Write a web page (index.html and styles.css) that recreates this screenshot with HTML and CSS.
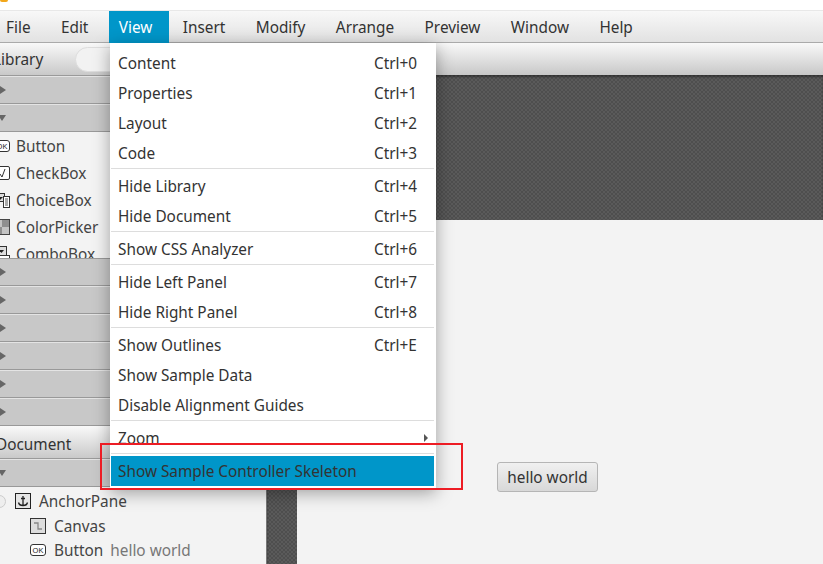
FILE: index.html
```html
<!DOCTYPE html>
<html lang="en">
<head>
  <meta charset="UTF-8" />
  <meta name="viewport" content="width=device-width, initial-scale=1.0" />
  <title>Scene Builder</title>
  <link rel="stylesheet" href="styles.css">
</head>
<body>
  <div class="title-strip"><span class="app-logo"></span></div>

  <div class="menu-bar">
    <span class="menu-title">File</span>
    <span class="menu-title">Edit</span>
    <span class="menu-title active">View</span>
    <span class="menu-title">Insert</span>
    <span class="menu-title">Modify</span>
    <span class="menu-title">Arrange</span>
    <span class="menu-title">Preview</span>
    <span class="menu-title">Window</span>
    <span class="menu-title">Help</span>
  </div>

  <div class="workspace">
    <div class="left-panel">
      <div class="panel-header">
        <span class="panel-name">Library</span>
        <span class="search-box"></span>
      </div>
      <div class="section"><span class="arrow-right"></span></div>
      <div class="section"><span class="arrow-down"></span></div>
      <div class="library-list">
        <div class="library-item">
          <svg class="icon" viewBox="0 0 16 12"><rect x="0.5" y="0.5" width="15" height="11" rx="2.5" fill="#fff" stroke="#333"/><text x="8" y="8.8" class="icon-text">OK</text></svg>
          <span>Button</span>
        </div>
        <div class="library-item">
          <svg class="icon" viewBox="0 0 16 16"><rect x="0.5" y="1.5" width="15" height="13" rx="1.5" fill="#fff" stroke="#333"/><path d="M6 9l2 3 3-8" fill="none" stroke="#333"/></svg>
          <span>CheckBox</span>
        </div>
        <div class="library-item">
          <svg class="icon" viewBox="0 0 16 16"><rect x="0.5" y="1.5" width="10" height="8" fill="#ddd" stroke="#333"/><path d="M3 5h6l-3 3z" fill="#222"/><rect x="9.5" y="4.5" width="6" height="11" fill="#fff" stroke="#333"/><path d="M11 7h3M11 9h3M11 11h3M11 13h3" stroke="#555"/></svg>
          <span>ChoiceBox</span>
        </div>
        <div class="library-item">
          <svg class="icon" viewBox="0 0 16 16"><rect x="0.5" y="0.5" width="15" height="15" fill="#fff" stroke="#444"/><path d="M1 1h7v7H1zM8 8h7v7H8z" fill="#c4c4c4"/><path d="M8 1h7v7H8zM1 8h7v7H1z" fill="#8f8f8f"/></svg>
          <span>ColorPicker</span>
        </div>
        <div class="library-item">
          <svg class="icon" viewBox="0 0 16 16"><rect x="2.5" y="0.5" width="10" height="9" fill="#ddd" stroke="#333"/><path d="M5 4h5l-2.500 3z" fill="#222"/><rect x="0.5" y="9.500" width="15" height="6" fill="#fff" stroke="#333"/></svg>
          <span>ComboBox</span>
        </div>
      </div>
      <div class="section top-line"><span class="arrow-right"></span></div>
      <div class="section"><span class="arrow-right"></span></div>
      <div class="section"><span class="arrow-right"></span></div>
      <div class="section"><span class="arrow-right"></span></div>
      <div class="section"><span class="arrow-right"></span></div>
      <div class="section"><span class="arrow-right"></span></div>
      <div class="panel-header">
        <span class="panel-name doc-name">Document</span>
      </div>
      <div class="section"><span class="arrow-down"></span></div>
      <div class="doc-tree">
        <div class="tree-row root-row">
          <span class="collapse-dot"></span>
          <svg class="icon" viewBox="0 0 16 16"><rect x="0.5" y="0.5" width="15" height="15" fill="#e6e6e6" stroke="#222"/><path d="M8 3v9M6 5.500h4M3.500 9.500c.5 2.500 2.500 3 4.500 3s4-.5 4.500-3" fill="none" stroke="#222" stroke-width="1.300"/></svg>
          <span>AnchorPane</span>
        </div>
        <div class="tree-row child-row">
          <svg class="icon" viewBox="0 0 16 16"><rect x="0.5" y="0.5" width="15" height="15" fill="#ddd" stroke="#333"/><path d="M4 5h4v6h4" fill="none" stroke="#888" stroke-width="1.300"/></svg>
          <span>Canvas</span>
        </div>
        <div class="tree-row child-row">
          <svg class="icon" viewBox="0 0 16 12"><rect x="0.5" y="0.5" width="15" height="11" rx="2.5" fill="#fff" stroke="#333"/><text x="8" y="8.800" class="icon-text">OK</text></svg>
          <span>Button</span>
          <span class="node-label">hello world</span>
        </div>
      </div>
    </div>

    <div class="center-panel">
      <div class="toolbar"></div>
      <div class="stage">
        <div class="content-pane">
          <button class="hello-button" type="button">hello world</button>
        </div>
      </div>
    </div>
  </div>

  <div class="view-menu">
    <div class="menu-item"><span>Content</span><span class="shortcut">Ctrl+0</span></div>
    <div class="menu-item"><span>Properties</span><span class="shortcut">Ctrl+1</span></div>
    <div class="menu-item"><span>Layout</span><span class="shortcut">Ctrl+2</span></div>
    <div class="menu-item"><span>Code</span><span class="shortcut">Ctrl+3</span></div>
    <div class="separator"></div>
    <div class="menu-item"><span>Hide Library</span><span class="shortcut">Ctrl+4</span></div>
    <div class="menu-item"><span>Hide Document</span><span class="shortcut">Ctrl+5</span></div>
    <div class="separator"></div>
    <div class="menu-item"><span>Show CSS Analyzer</span><span class="shortcut">Ctrl+6</span></div>
    <div class="separator"></div>
    <div class="menu-item"><span>Hide Left Panel</span><span class="shortcut">Ctrl+7</span></div>
    <div class="menu-item"><span>Hide Right Panel</span><span class="shortcut">Ctrl+8</span></div>
    <div class="separator"></div>
    <div class="menu-item"><span>Show Outlines</span><span class="shortcut">Ctrl+E</span></div>
    <div class="menu-item"><span>Show Sample Data</span></div>
    <div class="menu-item"><span>Disable Alignment Guides</span></div>
    <div class="separator"></div>
    <div class="menu-item"><span>Zoom</span><span class="submenu-arrow"></span></div>
    <div class="separator"></div>
    <div class="menu-item selected"><span>Show Sample Controller Skeleton</span></div>
  </div>

  <div class="red-mark"></div>
</body>
</html>
```

FILE: styles.css
```css
html, body {
  height: 100%;
}
body {
  margin: 0;
  height: 564px;
  overflow: hidden;
  position: relative;
  background: #fff;
  color: #333;
  font-family: "Noto Sans", "Open Sans", sans-serif;
  font-size: 15.35px;
}

/* top of the window */
.title-strip {
  height: 11px;
  background: #fff;
  border-bottom: 1px solid #e8e8e8;
  box-sizing: border-box;
}
.app-logo {
  display: block;
  width: 8px;
  height: 2px;
  background: #f2a71b;
  border-radius: 0 0 4px 4px;
}
.menu-bar {
  display: flex;
  height: 32px;
  box-sizing: border-box;
  margin-left: -4px;
  background: linear-gradient(#f8f8f8, #e2e2e2);
  border-bottom: 1px solid #aaa;
}
.menu-title {
  padding: 0 17px 0 10px;
  margin-right: 3.400px;
  line-height: 32px;
}
.menu-title.active {
  background: #0096c9;
  color: #fff;
  height: 32px;
}

.workspace {
  display: flex;
  height: 521px;
}

/* left side */
.left-panel {
  width: 266px;
  flex: none;
  overflow: hidden;
  background: #f3f3f3;
}
.panel-header {
  display: flex;
  align-items: center;
  height: 33px;
  box-sizing: border-box;
  background: linear-gradient(#f9f9f9, #c9c9c9);
  border-bottom: 1px solid #9a9a9a;
}
.panel-name {
  margin-left: -7px;
  width: 82px;
  flex: none;
}
.doc-name {
  margin-left: -4px;
  padding-top: 3px;
}
.search-box {
  flex: 1;
  height: 25px;
  background: #f2f2f2;
  border: 1px solid #ddd;
  border-radius: 13px;
  box-sizing: border-box;
}
.section {
  height: 28px;
  box-sizing: border-box;
  background: #c8c8c8;
  border-bottom: 1px solid #999;
  border-top: 1px solid #e4e4e4;
  display: flex;
  align-items: center;
}
.section.top-line {
  border-top-color: #999;
}
.arrow-right {
  width: 0;
  height: 0;
  border-left: 6px solid #666;
  border-top: 4px solid transparent;
  border-bottom: 4px solid transparent;
}
.arrow-down {
  width: 0;
  height: 0;
  margin-left: -2px;
  border-top: 6px solid #666;
  border-left: 4px solid transparent;
  border-right: 4px solid transparent;
}
.library-list {
  height: 126px;
  overflow: hidden;
  margin-left: -6px;
  box-sizing: border-box;
}
.library-item {
  display: flex;
  align-items: center;
  gap: 6px;
  height: 27px;
  color: #444;
}
.icon {
  width: 16px;
  height: 16px;
  flex: none;
}
.icon-text {
  font-family: "Liberation Sans", sans-serif;
  font-size: 7.500px;
  text-anchor: middle;
  fill: #222;
}
.doc-tree {
  padding-top: 2px;
}
.tree-row {
  display: flex;
  align-items: center;
  gap: 8px;
  height: 24.500px;
  color: #444;
}
.root-row {
  margin-left: -7px;
}
.child-row {
  padding-left: 30px;
}
.collapse-dot {
  width: 13px;
  height: 13px;
  margin-right: 1px;
  box-sizing: border-box;
  flex: none;
  border: 1px solid #ccc;
  border-radius: 50%;
  background: #eee;
}
.node-label {
  margin-left: -1px;
  color: #777;
}

/* middle */
.center-panel {
  flex: 1;
  display: flex;
  flex-direction: column;
}
.toolbar {
  height: 32px;
  flex: none;
  background: linear-gradient(#f9f9f9, #c8c8c8);
}
.stage {
  flex: 1;
  background: repeating-conic-gradient(#4e4e4e 0 25%, #5a5a5a 0 50%) 0 0 / 4px 4px;
  border-left: 1px solid #777;
  padding: 145px 0 0 30px;
  box-shadow: inset 0 2px 2px rgba(0, 0, 0, 0.35);
  min-height: 0;
}
.content-pane {
  height: 344px;
  background: #f3f3f3;
  padding: 242px 0 0 200px;
  box-sizing: border-box;
}
.hello-button {
  width: 101px;
  height: 30px;
  padding: 0;
  background: linear-gradient(#f0f0f0, #d8d8d8);
  border: 1px solid #b5b5b5;
  border-radius: 3px;
  color: #333;
  font: inherit;
}

/* open View menu */
.view-menu {
  position: absolute;
  left: 110px;
  top: 43px;
  width: 326px;
  height: 446px;
  box-sizing: border-box;
  padding: 5px 2px 0 1px;
  background: #fff;
  box-shadow: 0 4px 16px rgba(0, 0, 0, 0.35);
}
.menu-item {
  display: flex;
  justify-content: space-between;
  align-items: center;
  height: 30px;
  padding: 0 15px 0 7px;
}
.shortcut {
  width: 45px;
}
.separator {
  height: 1px;
  margin: 0 0 2px;
  background: #ddd;
}
.submenu-arrow {
  width: 0;
  height: 0;
  margin-right: -9px;
  border-left: 4px solid #555;
  border-top: 4px solid transparent;
  border-bottom: 4px solid transparent;
}
.menu-item.selected {
  background: #0096c9;
}
.red-mark {
  position: absolute;
  left: 100px;
  top: 443px;
  width: 363px;
  height: 47px;
  box-sizing: border-box;
  border: 2px solid #ed1c24;
}
```
